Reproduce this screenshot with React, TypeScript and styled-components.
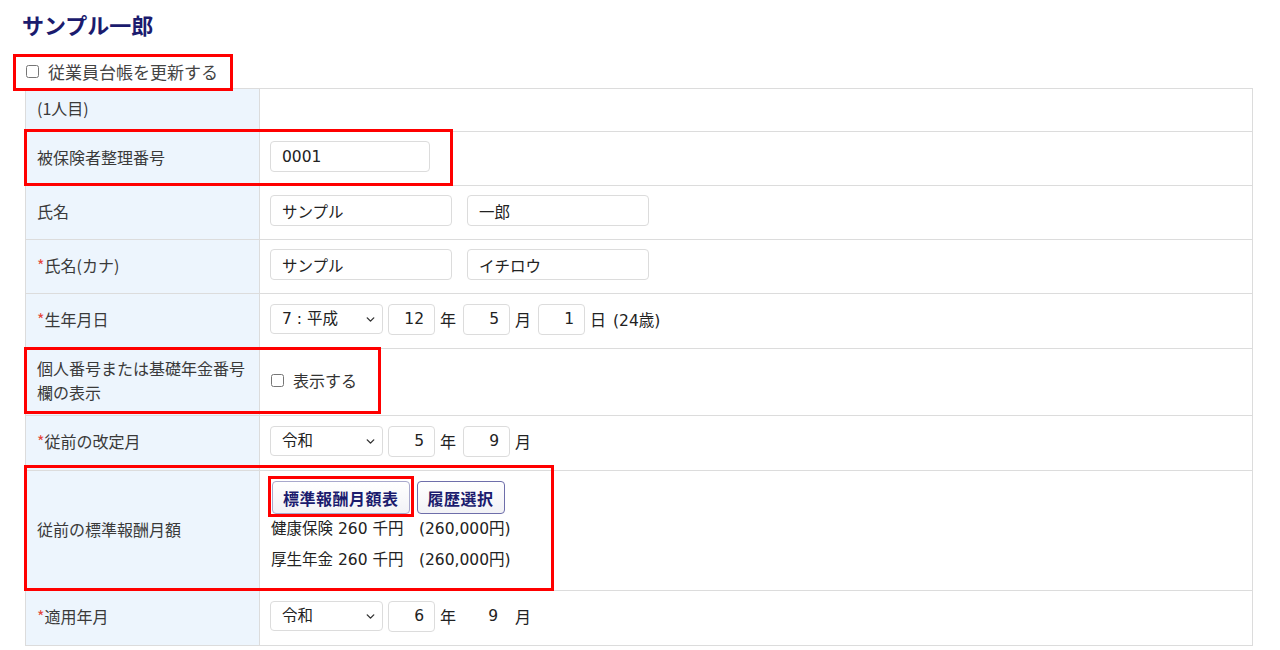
import React from 'react'
import styled, { createGlobalStyle } from 'styled-components'
import { ChevronDown } from 'lucide-react'

const GlobalStyle = createGlobalStyle`
  body {
    margin: 0;
    background: #fff;
    font-family: "DejaVu Sans", "Noto Sans CJK JP", sans-serif;
    color: #333;
  }
`

const Page = styled.div`
  position: relative;
  width: 1280px;
  height: 650px;
  padding: 8px 27px 0 25px;
  box-sizing: border-box;
  overflow: hidden;
`

const Title = styled.h1`
  margin: 0 0 0 -3px;
  font-family: "Noto Sans CJK JP", sans-serif;
  font-size: 22px;
  font-weight: 700;
  line-height: 32px;
  color: #1b1b6e;
`

const UpdateRow = styled.label`
  display: flex;
  align-items: center;
  gap: 9px;
  height: 30px;
  margin-top: 18px;
  padding: 0 0 3px 1px;
  box-sizing: border-box;
  font-family: "Noto Sans CJK JP", sans-serif;
  font-size: 17px;
  color: #444;
`

const Check = styled.input.attrs({ type: 'checkbox' })`
  width: 13px;
  height: 13px;
  margin: 0;
  accent-color: #666;
`

const Table = styled.table`
  width: 1228px;
  border-collapse: collapse;
  border: 1px solid #dcdcdc;
  font-size: 15.5px;
`

const Row = styled.tr<{ $h: number }>`
  height: ${p => p.$h}px;
  border-top: 1px solid #dcdcdc;
`

const Label = styled.th`
  width: 211px;
  padding: 0 11px 4px;
  background: #edf5fd;
  border-right: 1px solid #dcdcdc;
  text-align: left;
  font-weight: 400;
  font-size: 16px;
  line-height: 24px;
  color: #3a3a3a;
  font-family: "Noto Sans CJK JP", sans-serif;
`

const Req = styled.span`
  color: #e5473b;
`

const Cell = styled.td`
  padding: 0 10px 4px;
  vertical-align: middle;
  color: #222;
`

const Line = styled.div`
  display: flex;
  align-items: center;
`

const Field = styled.input<{ $w: number; $num?: boolean }>`
  box-sizing: border-box;
  width: ${p => p.$w}px;
  height: 31px;
  padding: ${p => (p.$num ? '0 10px 0 6px' : '0 11px')};
  border: 1px solid #dcdcdc;
  border-radius: 4px;
  font: 15.5px "DejaVu Sans", "Noto Sans CJK JP", sans-serif;
  color: #222;
  text-align: ${p => (p.$num ? 'right' : 'left')};
  background: #fff;
  outline: none;
`

const NameGap = styled.span`
  width: 15px;
`

const SelectWrap = styled.div`
  position: relative;
  width: 113px;
  height: 30px;
  margin-right: 5px;
`

const Select = styled.select`
  width: 100%;
  height: 100%;
  appearance: none;
  padding: 0 24px 0 11px;
  border: 1px solid #dcdcdc;
  border-radius: 4px;
  background: #fff;
  font: 15.5px "DejaVu Sans", "Noto Sans CJK JP", sans-serif;
  color: #222;
`

const Caret = styled(ChevronDown)`
  position: absolute;
  right: 6px;
  top: 9px;
  pointer-events: none;
  color: #333;
`

const Unit = styled.span`
  margin: 0 7px 0 5px;
  font-family: "Noto Sans CJK JP", sans-serif;
  font-size: 16px;
`

const PlainNum = styled.span`
  box-sizing: border-box;
  width: 47px;
  padding-right: 12px;
  text-align: right;
`

const ShowToggle = styled.label`
  display: flex;
  align-items: center;
  gap: 9px;
  padding-left: 1px;
  font-family: "Noto Sans CJK JP", sans-serif;
  font-size: 16px;
  color: #333;
`

const Buttons = styled.div`
  display: flex;
  gap: 7px;
  padding: 0 0 0 2px;
`

const RefButton = styled.button<{ $soft?: boolean }>`
  height: 33px;
  padding: 0 10px;
  border: 1px solid ${p => (p.$soft ? '#a8a8cc' : '#6e6eaa')};
  border-radius: 4px;
  background: linear-gradient(#ffffff, #f2f2f6);
  font: 700 16px "Noto Sans CJK JP", sans-serif;
  letter-spacing: 0.5px;
  color: #1b1b6e;
`

const Amount = styled.div`
  line-height: 31px;
  padding-left: 1px;
  color: #222;
`

const Highlight = styled.div<{ $x: number; $y: number; $w: number; $h: number }>`
  position: absolute;
  left: ${p => p.$x}px;
  top: ${p => p.$y}px;
  width: ${p => p.$w}px;
  height: ${p => p.$h}px;
  box-sizing: border-box;
  border: 3px solid #ff0000;
  pointer-events: none;
`

const EraSelect = ({ value }: { value: string }) => (
  <SelectWrap>
    <Select defaultValue={value}>
      <option>{value}</option>
    </Select>
    <Caret size={13} strokeWidth={2.6} />
  </SelectWrap>
)

export default function App() {
  return (
    <Page>
      <GlobalStyle />
      <Title>サンプル一郎</Title>
      <UpdateRow>
        <Check />
        従業員台帳を更新する
      </UpdateRow>
      <Table>
        <tbody>
          <Row $h={43}>
            <Label>(1人目)</Label>
            <Cell />
          </Row>
          <Row $h={54}>
            <Label>被保険者整理番号</Label>
            <Cell>
              <Field $w={160} defaultValue="0001" />
            </Cell>
          </Row>
          <Row $h={54}>
            <Label>氏名</Label>
            <Cell>
              <Line>
                <Field $w={182} defaultValue="サンプル" />
                <NameGap />
                <Field $w={182} defaultValue="一郎" />
              </Line>
            </Cell>
          </Row>
          <Row $h={54}>
            <Label>
              <Req>*</Req>氏名(カナ)
            </Label>
            <Cell>
              <Line>
                <Field $w={182} defaultValue="サンプル" />
                <NameGap />
                <Field $w={182} defaultValue="イチロウ" />
              </Line>
            </Cell>
          </Row>
          <Row $h={55}>
            <Label>
              <Req>*</Req>生年月日
            </Label>
            <Cell>
              <Line>
                <EraSelect value="7 : 平成" />
                <Field $w={47} $num defaultValue="12" />
                <Unit>年</Unit>
                <Field $w={47} $num defaultValue="5" />
                <Unit>月</Unit>
                <Field $w={47} $num defaultValue="1" />
                <Unit>日</Unit>(24歳)
              </Line>
            </Cell>
          </Row>
          <Row $h={67}>
            <Label>
              個人番号または基礎年金番号
              <br />
              欄の表示
            </Label>
            <Cell>
              <ShowToggle>
                <Check />
                表示する
              </ShowToggle>
            </Cell>
          </Row>
          <Row $h={55}>
            <Label>
              <Req>*</Req>従前の改定月
            </Label>
            <Cell>
              <Line>
                <EraSelect value="令和" />
                <Field $w={47} $num defaultValue="5" />
                <Unit>年</Unit>
                <Field $w={47} $num defaultValue="9" />
                <Unit>月</Unit>
              </Line>
            </Cell>
          </Row>
          <Row $h={120}>
            <Label>従前の標準報酬月額</Label>
            <Cell>
              <Buttons>
                <RefButton $soft>標準報酬月額表</RefButton>
                <RefButton>履歴選択</RefButton>
              </Buttons>
              <Amount>健康保険 260 千円　(260,000円)</Amount>
              <Amount>厚生年金 260 千円　(260,000円)</Amount>
            </Cell>
          </Row>
          <Row $h={55}>
            <Label>
              <Req>*</Req>適用年月
            </Label>
            <Cell>
              <Line>
                <EraSelect value="令和" />
                <Field $w={47} $num defaultValue="6" />
                <Unit>年</Unit>
                <PlainNum>9</PlainNum>
                <Unit>月</Unit>
              </Line>
            </Cell>
          </Row>
        </tbody>
      </Table>

      <Highlight $x={13} $y={54} $w={220} $h={37} />
      <Highlight $x={24} $y={129} $w={429} $h={57} />
      <Highlight $x={24} $y={347} $w={357} $h={67} />
      <Highlight $x={24} $y={465} $w={530} $h={126} />
      <Highlight $x={268} $y={476} $w={146} $h={41} />
    </Page>
  )
}
